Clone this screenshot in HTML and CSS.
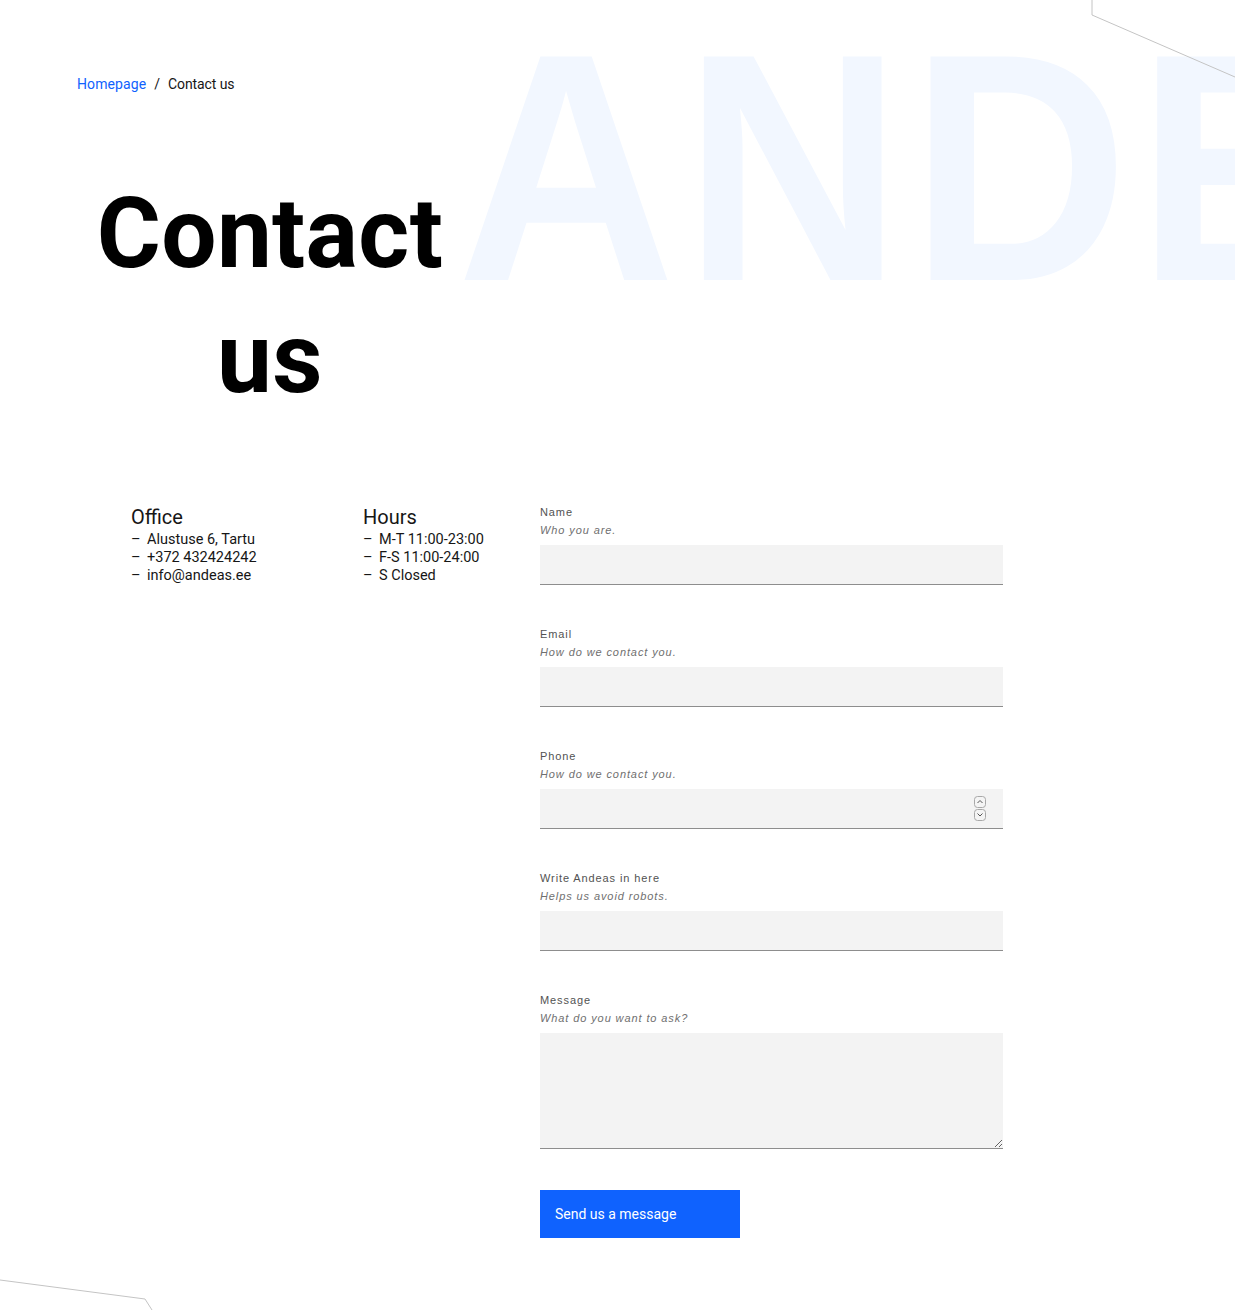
FILE: index.html
```html
<!DOCTYPE html>
<html lang="en">
<head>
<meta charset="utf-8">
<title>Contact us</title>
<link rel="stylesheet" href="styles.css">
</head>
<body>
<div class="page">
  <div class="bg-word" aria-hidden="true">ANDE</div>
  <svg class="deco deco-top" width="150" height="80" viewBox="0 0 150 80" aria-hidden="true">
    <polyline points="7,0 7,15 150,77" fill="none" stroke="#c4c4c4" stroke-width="1"/>
  </svg>
  <svg class="deco deco-bottom" width="160" height="32" viewBox="0 0 160 32" aria-hidden="true">
    <polyline points="0,1 145,20 152,31" fill="none" stroke="#c4c4c4" stroke-width="1"/>
  </svg>

  <nav class="breadcrumb">
    <a href="#" class="crumb-link">Homepage</a>
    <span class="crumb-sep">/</span>
    <span class="crumb-current">Contact us</span>
  </nav>

  <h1 class="title">Contact us</h1>

  <section class="contact">
    <div class="info">
      <h2 class="info-title">Office</h2>
      <ul class="info-list">
        <li>Alustuse 6, Tartu</li>
        <li>+372 432424242</li>
        <li>info@andeas.ee</li>
      </ul>
    </div>
    <div class="info">
      <h2 class="info-title">Hours</h2>
      <ul class="info-list">
        <li>M-T 11:00-23:00</li>
        <li>F-S 11:00-24:00</li>
        <li>S Closed</li>
      </ul>
    </div>
    <form class="form">
      <div class="field">
        <label class="label" for="name">Name</label>
        <div class="helper">Who you are.</div>
        <input class="input" id="name" type="text">
      </div>
      <div class="field">
        <label class="label" for="email">Email</label>
        <div class="helper">How do we contact you.</div>
        <input class="input" id="email" type="email">
      </div>
      <div class="field">
        <label class="label" for="phone">Phone</label>
        <div class="helper">How do we contact you.</div>
        <div class="input input-number">
          <span class="spinner">
            <svg width="12" height="26" viewBox="0 0 12 26">
              <rect x="0.5" y="0.5" width="11" height="11" rx="3" fill="#f4f4f4" stroke="#a8a8a8"/>
              <polyline points="3.5,7 6,4.5 8.5,7" fill="none" stroke="#555" stroke-width="1"/>
              <rect x="0.5" y="13.5" width="11" height="11" rx="3" fill="#f4f4f4" stroke="#a8a8a8"/>
              <polyline points="3.5,17.5 6,20 8.5,17.5" fill="none" stroke="#555" stroke-width="1"/>
            </svg>
          </span>
        </div>
      </div>
      <div class="field">
        <label class="label" for="robot">Write Andeas in here</label>
        <div class="helper">Helps us avoid robots.</div>
        <input class="input" id="robot" type="text">
      </div>
      <div class="field field-last">
        <label class="label" for="msg">Message</label>
        <div class="helper">What do you want to ask?</div>
        <textarea class="input textarea" id="msg"></textarea>
      </div>
      <button type="button" class="button">Send us a message</button>
    </form>
  </section>
</div>
</body>
</html>
```

FILE: styles.css
```css
* { box-sizing: border-box; }

html, body {
  margin: 0;
  padding: 0;
  background: #ffffff;
}

body {
  font-family: Roboto, "Liberation Sans", sans-serif;
  color: #161616;
  overflow: hidden;
}

.page {
  position: relative;
  width: 1235px;
  min-height: 1311px;
  padding: 74px 0 0 77px;
  overflow: hidden;
}

.bg-word {
  position: absolute;
  top: 5px;
  left: 457px;
  font-family: "Liberation Sans", Arial, sans-serif;
  font-weight: 700;
  font-size: 325px;
  line-height: 1;
  letter-spacing: 9px;
  color: #f2f7ff;
  white-space: nowrap;
  transform: scaleX(0.93);
  transform-origin: left top;
  z-index: 0;
  pointer-events: none;
}

.deco {
  position: absolute;
  z-index: 1;
}
.deco-top { top: 0; left: 1085px; }
.deco-bottom { top: 1279px; left: 0; }

.breadcrumb {
  position: relative;
  z-index: 2;
  display: flex;
  align-items: center;
  gap: 8px;
  font-size: 14px;
  line-height: 20px;
  height: 20px;
}
.crumb-link {
  color: #0f62fe;
  text-decoration: none;
  letter-spacing: 0.1px;
}
.crumb-current { color: #161616; letter-spacing: -0.1px; }

.title {
  position: relative;
  z-index: 2;
  margin: 77px 0 0 0;
  width: 386px;
  text-align: center;
  font-family: Roboto, "Liberation Sans", sans-serif;
  font-weight: 700;
  font-size: 98px;
  line-height: 125px;
  letter-spacing: 0.3px;
  color: #000;
}

.contact {
  position: relative;
  z-index: 2;
  display: grid;
  grid-template-columns: 232px 177px 463px;
  margin: 84px 0 0 54px;
  align-items: start;
}

.info-title {
  margin: 0;
  font-weight: 400;
  font-size: 20px;
  line-height: 25px;
  padding-bottom: 1px;
}

.info-list {
  list-style: none;
  margin: 0;
  padding: 0;
  font-size: 14.5px;
  line-height: 18px;
}
.info-list li::before {
  content: "–";
  display: inline-block;
  width: 16px;
}

.form {
  display: flex;
  flex-direction: column;
  align-items: flex-start;
}

.field {
  width: 463px;
  margin-bottom: 42px;
  display: flex;
  flex-direction: column;
}
.field-last { margin-bottom: 41px; }

.label {
  font-family: "Liberation Sans", Arial, sans-serif;
  font-size: 11px;
  line-height: 14px;
  letter-spacing: 0.9px;
  color: #525252;
  margin-bottom: 4px;
}

.helper {
  font-family: "Liberation Sans", Arial, sans-serif;
  font-style: italic;
  font-size: 11px;
  line-height: 14px;
  letter-spacing: 0.9px;
  color: #6f6f6f;
  margin-bottom: 8px;
}

.input {
  display: block;
  width: 463px;
  height: 40px;
  margin: 0;
  padding: 0 16px;
  border: none;
  border-bottom: 1px solid #8d8d8d;
  background: #f3f3f3;
  font-family: inherit;
  font-size: 14px;
  outline: none;
  border-radius: 0;
}

.input-number {
  display: flex;
  align-items: center;
  justify-content: flex-end;
  padding: 0 17px 0 0;
}
.spinner {
  display: flex;
}
.spinner svg { display: block; }

.textarea {
  height: 116px;
  resize: vertical;
  padding: 12px 16px;
}

.button {
  width: 200px;
  height: 48px;
  border: none;
  border-radius: 0;
  background: #0f62fe;
  color: #ffffff;
  font-family: Roboto, "Liberation Sans", sans-serif;
  font-size: 14px;
  letter-spacing: 0;
  text-align: left;
  padding: 0 15px;
  cursor: pointer;
}
```
